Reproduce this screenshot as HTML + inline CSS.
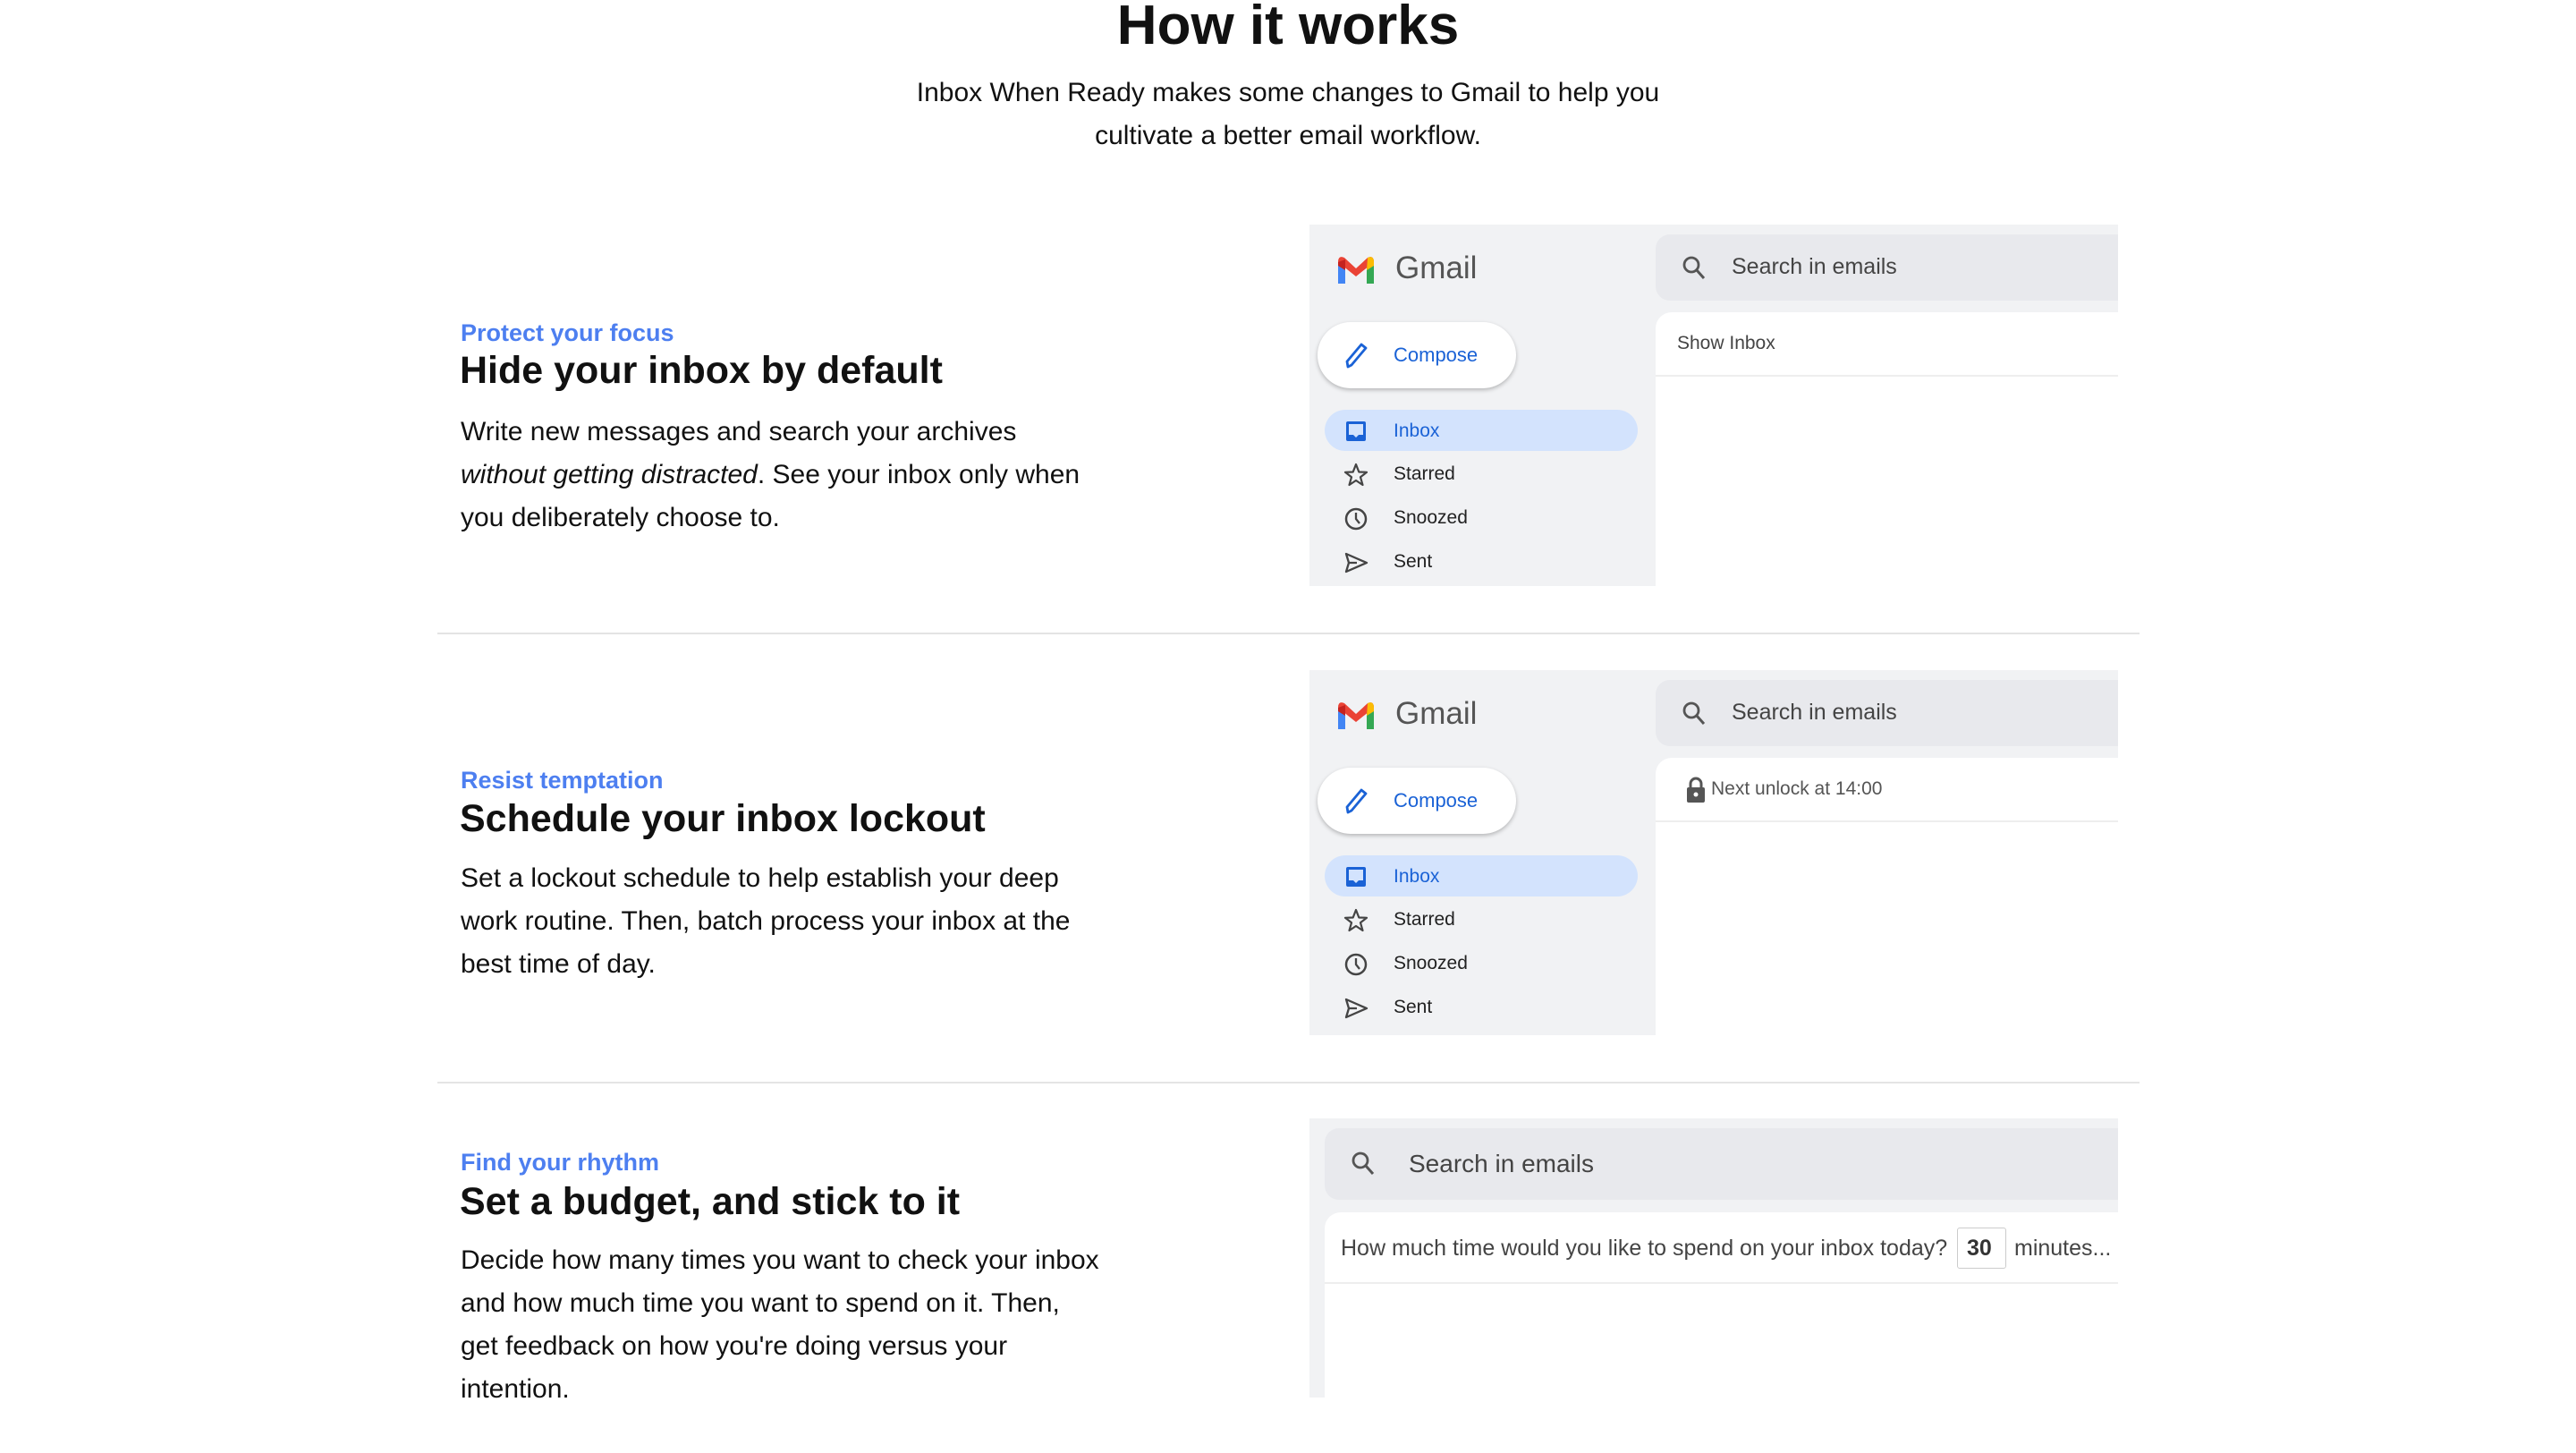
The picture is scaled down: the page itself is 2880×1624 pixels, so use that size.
<!DOCTYPE html>
<html><head><meta charset="utf-8"><style>
*{margin:0;padding:0;box-sizing:border-box}
body{width:2880px;height:1624px;background:#fff;position:relative;overflow:hidden;font-family:"Liberation Sans",Arial,sans-serif;color:#111}
.a{position:absolute;white-space:nowrap}
h1{position:absolute;left:0;width:2880px;text-align:center;top:-7px;font-size:62px;font-weight:bold;color:#111}
.sub{position:absolute;left:0;width:2880px;text-align:center;top:80px;font-size:30px;line-height:48px;color:#111}
.lab{font-size:27px;font-weight:bold;color:#4d7ff0}
.hd{font-size:43px;font-weight:bold;color:#111}
.bd{font-size:30px;line-height:48px;color:#111}
.div{position:absolute;left:489px;width:1903px;height:2px;background:#e4e4e4}
.panel{position:absolute;left:1464px;width:904px;background:#f1f2f4;overflow:hidden}
.srch{position:absolute;background:#e8e9ed;border-radius:16px 0 0 16px}
.cont{position:absolute;background:#fff;border-radius:18px 0 0 0}
.it{position:absolute;left:94px;font-size:21px;color:#222;line-height:26px}
</style></head><body>
<h1>How it works</h1>
<div class="sub">Inbox When Ready makes some changes to Gmail to help you<br>cultivate a better email workflow.</div>

<div class="a lab" style="left:515px;top:357px">Protect your focus</div>
<div class="a hd" style="left:514px;top:390px">Hide your inbox by default</div>
<div class="a bd" style="left:515px;top:459px">Write new messages and search your archives<br><i>without getting distracted</i>. See your inbox only when<br>you deliberately choose to.</div>
<div class="div" style="top:707px"></div>

<div class="a lab" style="left:515px;top:857px">Resist temptation</div>
<div class="a hd" style="left:514px;top:891px">Schedule your inbox lockout</div>
<div class="a bd" style="left:515px;top:958px">Set a lockout schedule to help establish your deep<br>work routine. Then, batch process your inbox at the<br>best time of day.</div>
<div class="div" style="top:1209px"></div>

<div class="a lab" style="left:515px;top:1284px">Find your rhythm</div>
<div class="a hd" style="left:514px;top:1319px">Set a budget, and stick to it</div>
<div class="a bd" style="left:515px;top:1385px">Decide how many times you want to check your inbox<br>and how much time you want to spend on it. Then,<br>get feedback on how you're doing versus your<br>intention.</div>

<svg width="0" height="0" style="position:absolute">
<defs>
<g id="mlogo"><path d="M2 9 L2 33 L10 33 L10 15 Z" fill="#4285f4"/><path d="M34 15 L34 33 L42 33 L42 9 Z" fill="#34a853"/><path d="M2 9 Q2 1 9 4 L22 16 L35 4 Q42 1 42 9 L22 25 Z" fill="#ea4335"/><path d="M35 4 Q42 1 42 9 L42 13 L34 18 Z" fill="#fbbc04"/><path d="M2 9 L2 13 L10 18 L10 6 Z" fill="#c5221f"/></g>
<g id="srch"><circle cx="11" cy="11" r="8" fill="none" stroke="#555" stroke-width="2.8"/><path d="M17 17 L25 26" stroke="#555" stroke-width="3"/></g>
</defs></svg>

<!-- panel 1 -->
<div class="panel" style="top:251px;height:404px">
 <svg style="position:absolute;left:30px;top:33px" width="44" height="34"><use href="#mlogo"/></svg>
 <div class="a" style="left:96px;top:29px;font-size:35px;color:#555">Gmail</div>
 <div style="position:absolute;left:9px;top:109px;width:222px;height:74px;background:#fff;border-radius:37px;box-shadow:0 2px 5px rgba(0,0,0,.25)"></div>
 <svg style="position:absolute;left:38px;top:130px" width="30" height="32"><path d="M5 29 L4 23 L20 4 L25 8 L9 27 Z" fill="none" stroke="#1a62d6" stroke-width="2.8" stroke-linejoin="round"/></svg>
 <div class="a" style="left:94px;top:133px;font-size:22px;color:#1a62d6">Compose</div>
 <div style="position:absolute;left:17px;top:207px;width:350px;height:46px;background:#d3e3fd;border-radius:23px"></div>
 <svg style="position:absolute;left:40px;top:219px" width="24" height="24"><rect x="1" y="1" width="22" height="22" rx="2" fill="#1a62d6"/><path d="M4 4 H20 V16 H15 L12 19 L9 16 H4Z" fill="#d3e3fd"/></svg>
 <div class="it" style="top:218px;color:#1a62d6">Inbox</div>
 <svg style="position:absolute;left:38px;top:266px" width="28" height="28"><path d="M14 2 L17.3 10.5 L26 10.8 L19 16.3 L21.5 25 L14 20 L6.5 25 L9 16.3 L2 10.8 L10.7 10.5Z" fill="none" stroke="#444" stroke-width="2.2" stroke-linejoin="round"/></svg>
 <div class="it" style="top:266px">Starred</div>
 <svg style="position:absolute;left:38px;top:315px" width="28" height="28"><circle cx="14" cy="14" r="11" fill="none" stroke="#444" stroke-width="2.5"/><path d="M14 7 V14 L18 19" fill="none" stroke="#444" stroke-width="2.3"/></svg>
 <div class="it" style="top:315px">Snoozed</div>
 <svg style="position:absolute;left:38px;top:364px" width="28" height="28"><path d="M3 4 L26 14 L3 24 L6 14 Z M6 14 H15" fill="none" stroke="#444" stroke-width="2.3" stroke-linejoin="round"/></svg>
 <div class="it" style="top:364px">Sent</div>
 <div class="srch" style="left:387px;top:11px;width:517px;height:74px"></div>
 <svg style="position:absolute;left:416px;top:34px" width="28" height="28"><use href="#srch"/></svg>
 <div class="a" style="left:472px;top:33px;font-size:25px;color:#444">Search in emails</div>
 <div class="cont" style="left:387px;top:98px;width:517px;height:306px"><div style="position:absolute;left:0;top:70px;width:100%;height:2px;background:#eee"></div></div>
 <div class="a" style="left:411px;top:121px;font-size:21px;color:#444">Show Inbox</div>
</div>

<!-- panel 2 -->
<div class="panel" style="top:749px;height:408px">
 <svg style="position:absolute;left:30px;top:33px" width="44" height="34"><use href="#mlogo"/></svg>
 <div class="a" style="left:96px;top:29px;font-size:35px;color:#555">Gmail</div>
 <div style="position:absolute;left:9px;top:109px;width:222px;height:74px;background:#fff;border-radius:37px;box-shadow:0 2px 5px rgba(0,0,0,.25)"></div>
 <svg style="position:absolute;left:38px;top:130px" width="30" height="32"><path d="M5 29 L4 23 L20 4 L25 8 L9 27 Z" fill="none" stroke="#1a62d6" stroke-width="2.8" stroke-linejoin="round"/></svg>
 <div class="a" style="left:94px;top:133px;font-size:22px;color:#1a62d6">Compose</div>
 <div style="position:absolute;left:17px;top:207px;width:350px;height:46px;background:#d3e3fd;border-radius:23px"></div>
 <svg style="position:absolute;left:40px;top:219px" width="24" height="24"><rect x="1" y="1" width="22" height="22" rx="2" fill="#1a62d6"/><path d="M4 4 H20 V16 H15 L12 19 L9 16 H4Z" fill="#d3e3fd"/></svg>
 <div class="it" style="top:218px;color:#1a62d6">Inbox</div>
 <svg style="position:absolute;left:38px;top:266px" width="28" height="28"><path d="M14 2 L17.3 10.5 L26 10.8 L19 16.3 L21.5 25 L14 20 L6.5 25 L9 16.3 L2 10.8 L10.7 10.5Z" fill="none" stroke="#444" stroke-width="2.2" stroke-linejoin="round"/></svg>
 <div class="it" style="top:266px">Starred</div>
 <svg style="position:absolute;left:38px;top:315px" width="28" height="28"><circle cx="14" cy="14" r="11" fill="none" stroke="#444" stroke-width="2.5"/><path d="M14 7 V14 L18 19" fill="none" stroke="#444" stroke-width="2.3"/></svg>
 <div class="it" style="top:315px">Snoozed</div>
 <svg style="position:absolute;left:38px;top:364px" width="28" height="28"><path d="M3 4 L26 14 L3 24 L6 14 Z M6 14 H15" fill="none" stroke="#444" stroke-width="2.3" stroke-linejoin="round"/></svg>
 <div class="it" style="top:364px">Sent</div>
 <div class="srch" style="left:387px;top:11px;width:517px;height:74px"></div>
 <svg style="position:absolute;left:416px;top:34px" width="28" height="28"><use href="#srch"/></svg>
 <div class="a" style="left:472px;top:33px;font-size:25px;color:#444">Search in emails</div>
 <div class="cont" style="left:387px;top:98px;width:517px;height:310px"><div style="position:absolute;left:0;top:70px;width:100%;height:2px;background:#eee"></div></div>
 <svg style="position:absolute;left:420px;top:118px" width="24" height="32"><path d="M6 14 V9 a6 6 0 0 1 12 0 V14" fill="none" stroke="#555" stroke-width="3"/><rect x="2" y="13" width="20" height="17" rx="2" fill="#555"/><circle cx="12" cy="21" r="2.5" fill="#fff"/></svg>
 <div class="a" style="left:449px;top:121px;font-size:21px;color:#555">Next unlock at 14:00</div>
</div>

<!-- panel 3 -->
<div class="panel" style="top:1250px;height:312px">
 <div class="srch" style="left:17px;top:11px;width:887px;height:80px"></div>
 <svg style="position:absolute;left:46px;top:36px" width="30" height="30"><use href="#srch"/></svg>
 <div class="a" style="left:111px;top:35px;font-size:28px;color:#444">Search in emails</div>
 <div class="cont" style="left:17px;top:105px;width:887px;height:207px"><div style="position:absolute;left:0;top:78px;width:100%;height:2px;background:#eee"></div></div>
 <div class="a" style="left:35px;top:131px;font-size:25px;color:#444">How much time would you like to spend on your inbox today?</div>
 <div style="position:absolute;left:724px;top:122px;width:55px;height:46px;border:1px solid #ccc;border-radius:3px;background:#fff"></div>
 <div class="a" style="left:735px;top:131px;font-size:25px;font-weight:bold;color:#333">30</div>
 <div class="a" style="left:788px;top:131px;font-size:25px;color:#444">minutes...</div>
</div>
</body></html>
